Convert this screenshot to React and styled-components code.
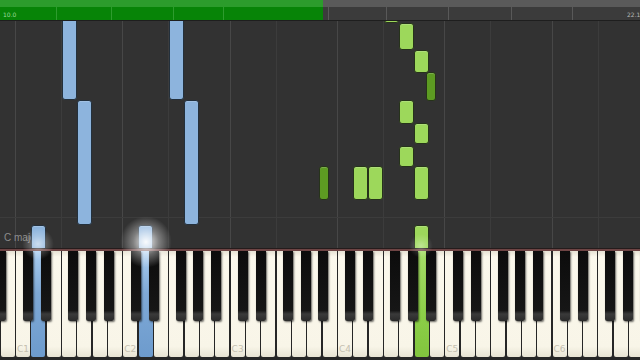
import React from "react";
import styled, { createGlobalStyle } from "styled-components";

const W = 15.333;
const C1X = 15.5;
const TOP = 21;

const Global = createGlobalStyle`
  html, body { margin: 0; padding: 0; background: #2b2b2b; }
  body { font-family: "DejaVu Sans", "Liberation Sans", sans-serif; }
`;

const Frame = styled.div`
  position: relative;
  width: 640px;
  height: 360px;
  overflow: hidden;
  display: flex;
  flex-direction: column;
  background: #1c1c1c;
`;

const TopBar = styled.div`
  position: relative;
  height: 20px;
  flex: 0 0 20px;
  display: flex;
  background: linear-gradient(#5a5a5a 0 7px, #3b3b3b 7px 20px);
  border-bottom: 1px solid #1e1e1e;
`;

const Progress = styled.div`
  width: 323px;
  height: 20px;
  background: linear-gradient(#2c9c2c 0 7px, #078407 7px 20px);
`;

const BarTick = styled.div.attrs((p) => ({ style: { left: `${p.$x}px` } }))`
  position: absolute;
  top: 7px;
  width: 1px;
  height: 13px;
  background: ${(p) => (p.$green ? "rgba(120,200,120,0.35)" : "rgba(110,110,110,0.6)")};
`;

const BarLabels = styled.div`
  position: absolute;
  left: 3px;
  right: 0;
  top: 11px;
  display: flex;
  justify-content: space-between;
  font-size: 6px;
  line-height: 7px;
`;

const BarLabel = styled.span`
  color: ${(p) => (p.$right ? "#b8b8b8" : "#9ad89a")};
  ${(p) => (p.$right ? "width: 13px; overflow: hidden; white-space: nowrap;" : "")}
`;

const Canvas = styled.div`
  position: relative;
  flex: 0 0 227px;
  height: 227px;
  overflow: hidden;
  background-color: #323232;
`;

const GridLine = styled.div.attrs((p) => ({ style: { left: `${p.$x}px` } }))`
  position: absolute;
  top: 0;
  bottom: 0;
  width: 1px;
  background: ${(p) => (p.$major ? "#474747" : "#3c3c3c")};
`;

const HLine = styled.div`
  position: absolute;
  left: 0;
  right: 0;
  top: ${217 - TOP}px;
  height: 1px;
  background: #3c3c3c;
`;

const Note = styled.div.attrs((p) => ({
  style: { left: `${p.$x}px`, top: `${p.$y - TOP}px`, width: `${p.$w}px`, height: `${p.$h}px` },
}))`
  position: absolute;
  box-sizing: border-box;
  border-radius: 3px;
  border: 1px solid ${(p) => (p.$c === "blue" ? "#23303c" : "#26331a")};
  background: ${(p) =>
    p.$c === "blue" ? "#8db4dd" : p.$c === "green" ? "#9dd85b" : "#5d9b22"};
  box-shadow: inset 0 1px 0 rgba(255, 255, 255, 0.18);
`;

const KeyLabelTag = styled.span`
  position: absolute;
  left: 4px;
  top: ${232 - TOP}px;
  font-family: "Liberation Sans", sans-serif;
  font-size: 10px;
  color: #8c8c8c;
`;

const Felt = styled.div`
  flex: 0 0 3px;
  background: linear-gradient(#241c1c 0 1px, #6e4444 1px 3px);
`;

const Keyboard = styled.div`
  position: relative;
  flex: 0 0 109px;
  background: #262626;
  overflow: hidden;
`;

const WhiteRow = styled.div`
  display: flex;
  gap: 1.333px;
  margin-left: 0.7px;
  height: 106px;
`;

const WhiteKey = styled.div`
  position: relative;
  flex: 0 0 14px;
  height: 106px;
  border-radius: 0 0 2px 2px;
  display: flex;
  align-items: flex-end;
  padding: 0 0 2px 1px;
  box-sizing: border-box;
  background: ${(p) =>
    p.$press === "blue"
      ? "linear-gradient(#a9cdf0, #7fa9d6 40%, #6d9bcd)"
      : p.$press === "green"
      ? "linear-gradient(#a6de68, #8ccf48 60%, #82c53e)"
      : "linear-gradient(#e6e2d4 0, #fbf8ec 6px, #f8f5e8 90%, #e8e3d3 100%)"};
`;

const WhiteLabel = styled.span`
  font-size: 9px;
  line-height: 11px;
  color: #c5c0b0;
`;

const BlackKey = styled.div.attrs((p) => ({ style: { left: `${p.$x}px` } }))`
  position: absolute;
  top: 0;
  width: 10px;
  height: 70px;
  border-radius: 0 0 2px 2px;
  background: linear-gradient(#0c0c0c 0, #161616 85%, #3a3a3a 90%, #2a2a2a 100%);
  box-shadow: 1px 1px 2px rgba(0, 0, 0, 0.6);
`;

const Glow = styled.div.attrs((p) => ({
  style: { left: `${p.$x - p.$r}px`, top: `${p.$y - p.$r}px`, width: `${2 * p.$r}px`, height: `${2 * p.$r}px` },
}))`
  position: absolute;
  border-radius: 50%;
  pointer-events: none;
  background: radial-gradient(
    circle,
    rgba(255, 255, 255, ${(p) => p.$a}) 0%,
    rgba(255, 255, 255, ${(p) => p.$a * 0.4}) 35%,
    rgba(255, 255, 255, 0) 70%
  );
`;

const LETTERS = ["C", "D", "E", "F", "G", "A", "B"];
const whiteKeys = Array.from({ length: 42 }, (_, i) => {
  if (i === 0) return { name: "B0", letter: "B" };
  const n = i - 1;
  const letter = LETTERS[n % 7];
  return { name: `${letter}${1 + Math.floor(n / 7)}`, letter };
});
const pressed = { 2: "blue", 9: "blue", 27: "green" };

const BLACK_OFF = [
  [1, -2.4],
  [2, 0.3],
  [4, -3.4],
  [5, -1],
  [6, 1.3],
];
const blackKeys = [];
for (let o = 0; o <= 6; o++) {
  const cx = C1X + (o - 1) * 7 * W;
  BLACK_OFF.forEach(([k, off]) => {
    const center = cx + k * W + off;
    if (center > -8 && center < 648) blackKeys.push(center - 5);
  });
}

const gridLines = [];
for (let o = 0; o <= 6; o++) {
  const cx = C1X + (o - 1) * 7 * W;
  if (cx > 0 && cx < 640) gridLines.push({ x: cx - 0.5, major: true });
  const fx = cx + 3 * W;
  if (fx > 0 && fx < 640) gridLines.push({ x: fx - 0.5, major: false });
}

// column of a white key, counted from C1 = 0
const col = (i) => C1X + i * W + 0.2;
const notes = [
  { x: col(3), y: 16, w: 15, h: 84, c: "blue" },
  { x: col(4), y: 100, w: 15, h: 125, c: "blue" },
  { x: col(10), y: 16, w: 15, h: 84, c: "blue" },
  { x: col(11), y: 100, w: 15, h: 125, c: "blue" },
  { x: col(1), y: 225, w: 15, h: 30, c: "blue" },
  { x: col(8), y: 225, w: 15, h: 30, c: "blue" },
  { x: col(24), y: 16, w: 15, h: 7, c: "green" },
  { x: col(25), y: 23, w: 15, h: 27, c: "green" },
  { x: col(26), y: 50, w: 15, h: 23, c: "green" },
  { x: 426, y: 72, w: 10, h: 29, c: "dark" },
  { x: col(25), y: 100, w: 15, h: 24, c: "green" },
  { x: col(26), y: 123, w: 15, h: 21, c: "green" },
  { x: col(25), y: 146, w: 15, h: 21, c: "green" },
  { x: col(26), y: 166, w: 15, h: 34, c: "green" },
  { x: col(22), y: 166, w: 15, h: 34, c: "green" },
  { x: col(23), y: 166, w: 15, h: 34, c: "green" },
  { x: 318.5, y: 166, w: 10, h: 34, c: "dark" },
  { x: col(26), y: 225, w: 15, h: 30, c: "green" },
];

const barTicks = [
  { x: 56, g: true },
  { x: 111, g: true },
  { x: 173, g: true },
  { x: 223, g: true },
  { x: 328 },
  { x: 386 },
  { x: 448 },
  { x: 511 },
  { x: 572 },
];

export default function App() {
  return (
    <>
      <Global />
      <Frame>
        <TopBar>
          <Progress />
          {barTicks.map((t) => (
            <BarTick key={t.x} $x={t.x} $green={t.g} />
          ))}
          <BarLabels>
            <BarLabel>10.0</BarLabel>
            <BarLabel $right>22.1</BarLabel>
          </BarLabels>
        </TopBar>
        <Canvas>
          {gridLines.map((g) => (
            <GridLine key={g.x} $x={g.x} $major={g.major} />
          ))}
          <HLine />
          <KeyLabelTag>C major</KeyLabelTag>
          {notes.map((n, i) => (
            <Note key={i} $x={n.x} $y={n.y} $w={n.w} $h={n.h} $c={n.c} />
          ))}
        </Canvas>
        <Felt />
        <Keyboard>
          <WhiteRow>
            {whiteKeys.map((k, i) => (
              <WhiteKey key={k.name} $press={pressed[i]}>
                {k.letter === "C" && <WhiteLabel>{k.name}</WhiteLabel>}
              </WhiteKey>
            ))}
          </WhiteRow>
          {blackKeys.map((x) => (
            <BlackKey key={x} $x={x} />
          ))}
        </Keyboard>
        <Glow $x={146} $y={242} $r={26} $a={0.95} />
        <Glow $x={38} $y={244} $r={16} $a={0.55} />
        <Glow $x={421} $y={246} $r={12} $a={0.35} />
      </Frame>
    </>
  );
}
